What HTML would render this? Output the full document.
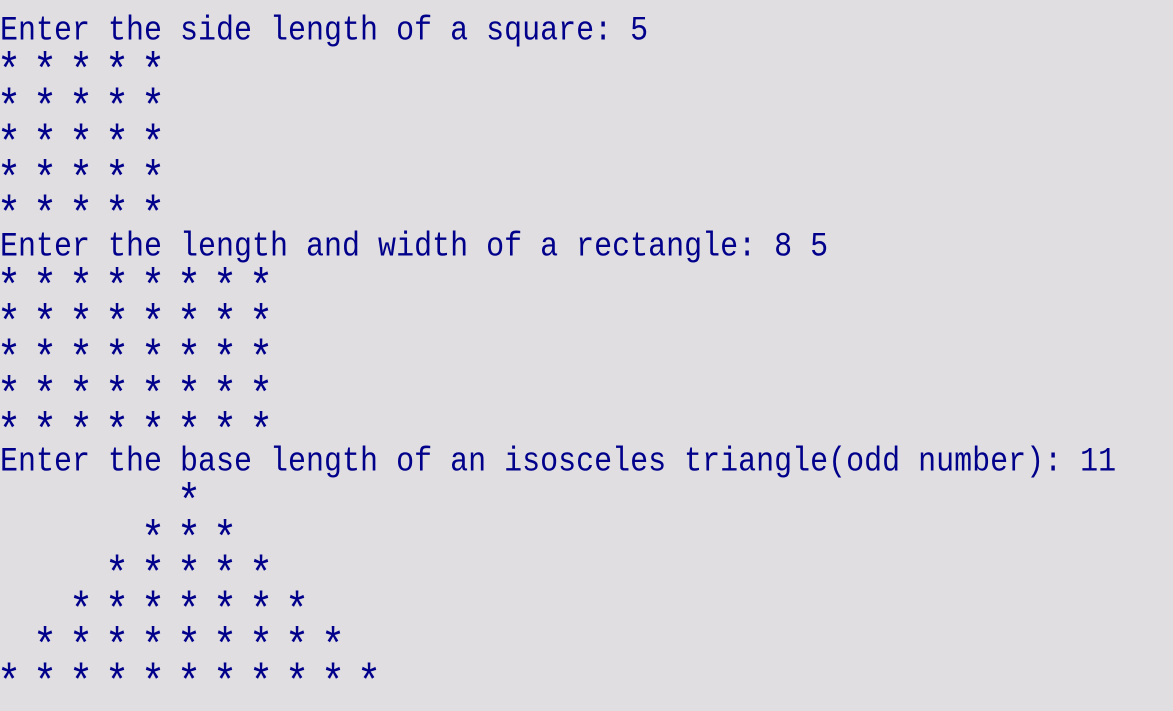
<!DOCTYPE html>
<html><head><style>
html,body{margin:0;padding:0;background:#e0dee1;width:1173px;height:701px;overflow:hidden}
pre{margin:0;position:absolute;left:0;top:14px;font-family:"Liberation Mono",monospace;font-size:30px;line-height:31.25px;color:#00008b;transform:scaleY(1.15);transform-origin:0 0}
pre b{font-weight:normal;display:inline-block;transform:translateY(6px) scale(1.35)}
</style></head><body><pre>Enter the side length of a square: 5
<b>*</b> <b>*</b> <b>*</b> <b>*</b> <b>*</b>
<b>*</b> <b>*</b> <b>*</b> <b>*</b> <b>*</b>
<b>*</b> <b>*</b> <b>*</b> <b>*</b> <b>*</b>
<b>*</b> <b>*</b> <b>*</b> <b>*</b> <b>*</b>
<b>*</b> <b>*</b> <b>*</b> <b>*</b> <b>*</b>
Enter the length and width of a rectangle: 8 5
<b>*</b> <b>*</b> <b>*</b> <b>*</b> <b>*</b> <b>*</b> <b>*</b> <b>*</b>
<b>*</b> <b>*</b> <b>*</b> <b>*</b> <b>*</b> <b>*</b> <b>*</b> <b>*</b>
<b>*</b> <b>*</b> <b>*</b> <b>*</b> <b>*</b> <b>*</b> <b>*</b> <b>*</b>
<b>*</b> <b>*</b> <b>*</b> <b>*</b> <b>*</b> <b>*</b> <b>*</b> <b>*</b>
<b>*</b> <b>*</b> <b>*</b> <b>*</b> <b>*</b> <b>*</b> <b>*</b> <b>*</b>
Enter the base length of an isosceles triangle(odd number): 11
          <b>*</b>
        <b>*</b> <b>*</b> <b>*</b>
      <b>*</b> <b>*</b> <b>*</b> <b>*</b> <b>*</b>
    <b>*</b> <b>*</b> <b>*</b> <b>*</b> <b>*</b> <b>*</b> <b>*</b>
  <b>*</b> <b>*</b> <b>*</b> <b>*</b> <b>*</b> <b>*</b> <b>*</b> <b>*</b> <b>*</b>
<b>*</b> <b>*</b> <b>*</b> <b>*</b> <b>*</b> <b>*</b> <b>*</b> <b>*</b> <b>*</b> <b>*</b> <b>*</b></pre></body></html>
